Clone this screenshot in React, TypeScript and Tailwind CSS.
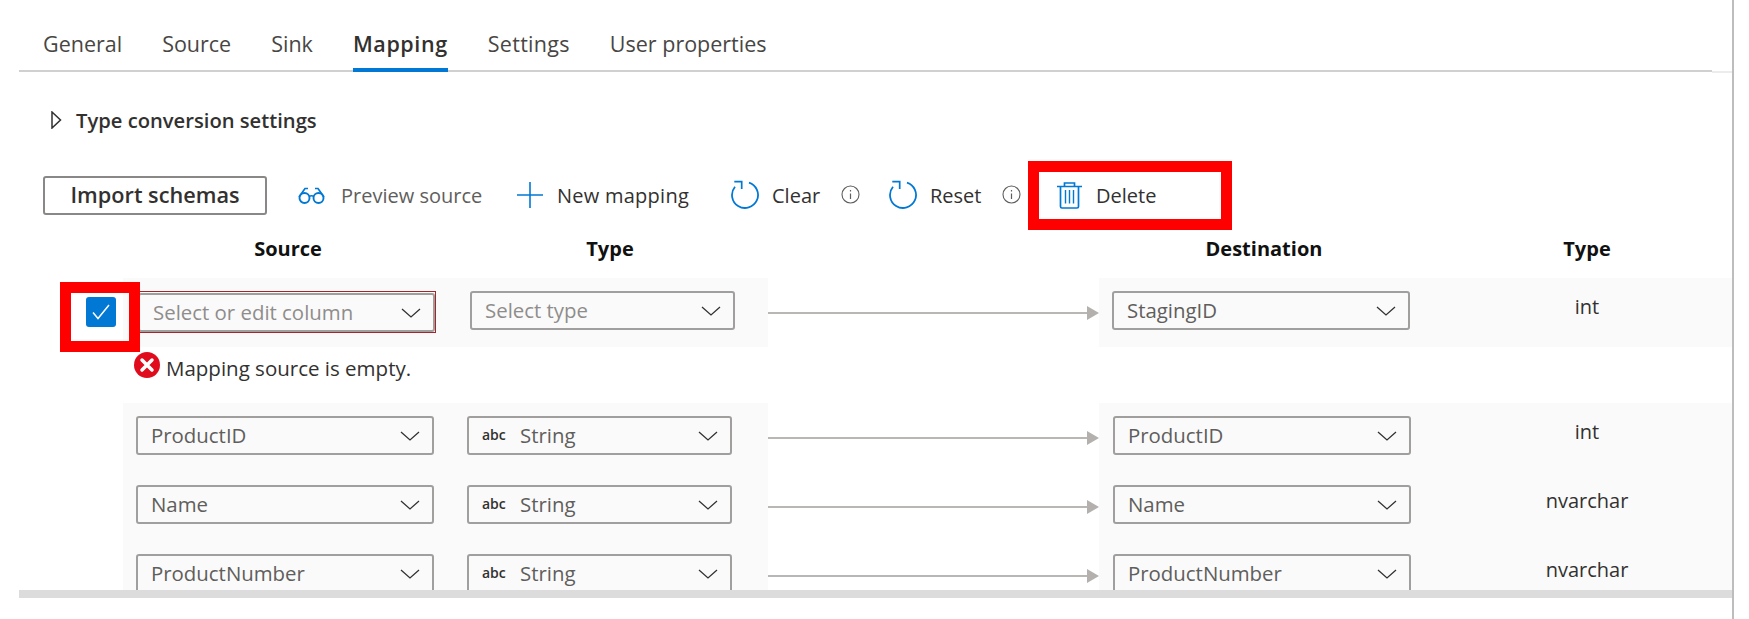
import React from "react";

function Chevron() {
  return (
    <svg width="20" height="10" viewBox="0 0 20 10" fill="none" className="shrink-0">
      <path d="M1 1l9 8 9-8" stroke="#323130" strokeWidth="1.3" />
    </svg>
  );
}

function Select({ w, text, placeholder, abc }: { w: string; text: string; placeholder?: boolean; abc?: boolean }) {
  return (
    <div className={`${w} h-[39px] shrink-0 flex items-center border-2 border-[#a19f9d] rounded-[3px] pl-[13px] pr-[12px] bg-[#fafafa]`}>
      {abc && <span className="w-[38px] text-[14px] font-semibold text-[#323130] -mt-[3px]">abc</span>}
      <span className={`flex-1 text-[20.4px] whitespace-nowrap ${placeholder ? "text-[#8f8d8b]" : "text-[#605e5c]"}`}>{text}</span>
      <Chevron />
    </div>
  );
}

function Arrow() {
  return (
    <div className="w-[331px] shrink-0 flex items-center">
      <div className="flex-1 h-[2px] bg-[#b9b6b3]" />
      <svg width="12" height="14" viewBox="0 0 12 14" className="shrink-0"><path d="M0 0l12 7-12 7z" fill="#b3b0ad" /></svg>
    </div>
  );
}

function Row({ source, dest, type }: { source: string; dest: string; type: string }) {
  return (
    <div className="h-[69px] flex shrink-0">
      <div className="w-[645px] shrink-0 flex pt-[13px] pl-[13px] gap-[33px] bg-[#fafafa]">
        <Select w="w-[298px]" text={source} />
        <Select w="w-[265px]" text="String" abc />
      </div>
      <Arrow />
      <div className="flex-1 flex pt-[13px] pl-[14px] bg-[#fafafa]">
        <Select w="w-[298px]" text={dest} />
        <div className="ml-[76px] w-[200px] -mt-[4px] h-[39px] flex items-center justify-center text-[20px] text-[#323130]">{type}</div>
      </div>
    </div>
  );
}

function Refresh() {
  return (
    <svg width="28" height="30" viewBox="0 0 28 30" fill="none" className="shrink-0">
      <path d="M18 2.600A13 13 0 1 1 4 6.700" stroke="#0078d4" strokeWidth="1.8" />
      <path d="M3.300 1.700H10.700V9" stroke="#0078d4" strokeWidth="1.7" />
    </svg>
  );
}

function Info() {
  return (
    <svg width="19" height="19" viewBox="0 0 19 19" fill="none" className="shrink-0 -mt-[2px]">
      <circle cx="9.500" cy="9.500" r="8.500" stroke="#605e5c" strokeWidth="1.100" />
      <path d="M9.500 8.500v5.500M9.500 5v1.600" stroke="#605e5c" strokeWidth="1.200" />
    </svg>
  );
}

export default function App() {
  const tabs = ["General", "Source", "Sink", "Mapping", "Settings", "User properties"];
  return (
    <div className="relative w-[1749px] h-[619px] overflow-hidden bg-white font-['Open_Sans',sans-serif]">
      <div className="w-[1734px] h-full border-r-2 border-[#bdbdbd] flex flex-col">
        <div className="h-[73px] shrink-0 flex pl-[19px]">
          <div className="flex-1 h-[72px] border-b-2 border-[#d2d0ce] flex pl-[24px] gap-[40px]">
            {tabs.map((t) => (
              <div
                key={t}
                className={`h-[72px] pt-[28px] text-[21.5px] leading-[32px] whitespace-nowrap ${
                  t === "Mapping"
                    ? "font-semibold text-[#323130] tracking-[0.6px] border-b-[4px] border-[#0078d4]"
                    : t === "Settings"
                      ? "text-[#484644] tracking-[0.3px]"
                      : "text-[#484644]"
                }`}
              >
                {t}
              </div>
            ))}
          </div>
          <div className="w-[20px] h-[73px] border-b-2 border-[#ececec]" />
        </div>

        <div className="mt-[27px] h-[40px] shrink-0 flex items-center pl-[51px]">
          <svg width="11" height="18" viewBox="0 0 11 18" fill="none"><path d="M1 1l8.500 8L1 17z" stroke="#323130" strokeWidth="1.500" /></svg>
          <span className="ml-[14px] text-[20.2px] font-semibold text-[#323130] whitespace-nowrap">Type conversion settings</span>
        </div>

        <div className="mt-[36px] h-[38px] shrink-0 flex items-center pl-[43px] text-[20px] text-[#323130]">
          <button className="w-[224px] h-[39px] shrink-0 border-2 border-[#8a8886] rounded-[3px] text-[21.7px] font-semibold text-[#323130]">Import schemas</button>
          <svg width="29" height="18" viewBox="0 0 29 18" fill="none" className="ml-[30px] shrink-0">
            <circle cx="7.500" cy="12" r="5" stroke="#0078d4" strokeWidth="1.900" />
            <circle cx="21.500" cy="12" r="5" stroke="#0078d4" strokeWidth="1.900" />
            <path d="M12 10.500q2.500-1.500 5 0M2 11L8 2.500h3M27 11L21 2.500h-3" stroke="#0078d4" strokeWidth="1.700" />
          </svg>
          <span className="ml-[15px] w-[141px] pt-[2px] whitespace-nowrap text-[#605e5c]">Preview source</span>
          <svg width="26" height="26" viewBox="0 0 26 26" fill="none" className="ml-[35px] shrink-0"><path d="M13 0v26M0 13h26" stroke="#0078d4" strokeWidth="1.600" /></svg>
          <span className="ml-[14px] w-[133px] pt-[2px] whitespace-nowrap tracking-[0.25px]">New mapping</span>
          <div className="ml-[41px] flex items-center"><Refresh /></div>
          <span className="ml-[13px] w-[48px] pt-[2px] whitespace-nowrap">Clear</span>
          <div className="ml-[21px] flex items-center"><Info /></div>
          <div className="ml-[29px] flex items-center"><Refresh /></div>
          <span className="ml-[13px] w-[51px] pt-[2px] whitespace-nowrap">Reset</span>
          <div className="ml-[21px] flex items-center"><Info /></div>
          <svg width="25" height="27" viewBox="0 0 25 27" fill="none" className="ml-[36px] shrink-0">
            <path d="M0 4.500h25M7.500 4.500V1h10v3.500M3.500 4.500v20q0 1.500 1.500 1.500h15q1.500 0 1.500-1.500v-20" stroke="#0078d4" strokeWidth="1.700" />
            <path d="M8.500 8v13.500M12.500 8v13.500M16.500 8v13.500" stroke="#0078d4" strokeWidth="1.400" />
          </svg>
          <span className="ml-[14px] pt-[2px] whitespace-nowrap">Delete</span>
        </div>

        <div className="h-[64px] pt-[6px] shrink-0 flex items-center text-[20px] font-bold text-[#111] pl-[138px]">
          <div className="w-[300px] text-center">Source</div>
          <div className="ml-[32px] w-[280px] text-center">Type</div>
          <div className="ml-[364px] w-[300px] text-center">Destination</div>
          <div className="ml-[73px] w-[200px] text-center">Type</div>
        </div>

        <div className="h-[312px] shrink-0 overflow-hidden flex flex-col">
          <div className="h-[69px] flex shrink-0">
            <div className="w-[123px] shrink-0 pl-[86px] pt-[19px]">
              <div className="w-[30px] h-[30px] rounded-[3px] bg-[#0078d4] flex items-center justify-center">
                <svg width="18" height="16" viewBox="0 0 18 16" fill="none"><path d="M1 8.500l5 6L17 1" stroke="#fff" strokeWidth="1.500" /></svg>
              </div>
            </div>
            <div className="w-[645px] shrink-0 flex pt-[13px] pl-[14px] gap-[34px] bg-[#fafafa]">
              <div className="w-[299px] h-[42px] shrink-0 border border-[#a4262c] pt-[1px]">
                <Select w="w-full" text="Select or edit column" placeholder />
              </div>
              <Select w="w-[265px]" text="Select type" placeholder />
            </div>
            <Arrow />
            <div className="flex-1 flex pt-[13px] pl-[13px] bg-[#fafafa]">
              <Select w="w-[298px]" text="StagingID" />
              <div className="ml-[77px] w-[200px] -mt-[4px] h-[39px] flex items-center justify-center text-[20px] text-[#323130]">int</div>
            </div>
          </div>

          <div className="h-[56px] shrink-0 pl-[134px] pt-[5px] flex items-start">
            <svg width="26" height="26" viewBox="0 0 26 26" className="shrink-0">
              <circle cx="13" cy="13" r="13" fill="#e00b1c" />
              <path d="M8 8l10 10M18 8L8 18" stroke="#fff" strokeWidth="3.500" strokeLinecap="round" />
            </svg>
            <span className="ml-[6px] text-[20.5px] leading-[32px] text-[#323130] whitespace-nowrap">Mapping source is empty.</span>
          </div>

          <div className="pl-[123px] flex flex-col">
            <Row source="ProductID" dest="ProductID" type="int" />
            <Row source="Name" dest="Name" type="nvarchar" />
            <Row source="ProductNumber" dest="ProductNumber" type="nvarchar" />
          </div>
        </div>

        <div className="ml-[19px] h-[8px] shrink-0 bg-[#dcdcdc]" />
      </div>

      <div className="absolute left-[1028px] top-[161px] w-[204px] h-[69px] border-[11px] border-[#ff0000]" />
      <div className="absolute left-[60px] top-[282px] w-[80px] h-[70px] border-[11px] border-[#ff0000]" />
    </div>
  );
}
